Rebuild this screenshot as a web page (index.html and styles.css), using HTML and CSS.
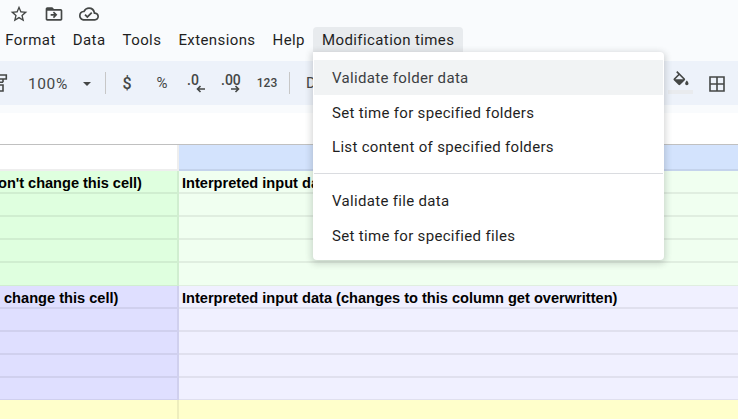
FILE: index.html
```html
<!DOCTYPE html>
<html lang="en">
<head>
<meta charset="utf-8">
<title>Spreadsheet</title>
<link rel="stylesheet" href="styles.css">
</head>
<body>
<header class="header">
  <div class="title-icons">
    <svg class="icon" viewBox="0 0 24 24"><path d="M22 9.24l-7.19-.62L12 2 9.19 8.63 2 9.24l5.46 4.73L5.82 21 12 17.27 18.18 21l-1.63-7.03L22 9.24zM12 15.4l-3.76 2.27 1-4.28-3.32-2.88 4.38-.38L12 6.1l1.71 4.04 4.38.38-3.32 2.88 1 4.28L12 15.4z"/></svg>
    <svg class="icon" viewBox="0 0 24 24"><path d="M20 6h-8l-2-2H4c-1.100 0-2 .9-2 2v12c0 1.100.9 2 2 2h16c1.100 0 2-.9 2-2V8c0-1.100-.9-2-2-2zm0 12H4V8h16v10zm-8-1 4-4-4-4-1.400 1.400 1.600 1.600H8v2h4.200l-1.600 1.600z"/></svg>
    <svg class="icon" viewBox="0 0 24 24"><path d="M19.350 10.040A7.490 7.490 0 0 0 12 4C9.110 4 6.600 5.640 5.350 8.040A5.994 5.994 0 0 0 0 14c0 3.310 2.690 6 6 6h13c2.760 0 5-2.240 5-5 0-2.640-2.050-4.780-4.650-4.960zM19 18H6c-2.210 0-4-1.790-4-4 0-2.050 1.530-3.760 3.560-3.970l1.070-.11.5-.95A5.469 5.469 0 0 1 12 6c2.620 0 4.880 1.860 5.390 4.430l.3 1.500 1.530.11A2.980 2.980 0 0 1 22 15c0 1.650-1.350 3-3 3zm-9-3.820-2.090-2.090L6.500 13.500 10 17l6.010-6.010-1.410-1.410z"/></svg>
  </div>
  <nav class="menubar">
    <span class="menu-name">Format</span>
    <span class="menu-name">Data</span>
    <span class="menu-name">Tools</span>
    <span class="menu-name">Extensions</span>
    <span class="menu-name">Help</span>
    <span class="menu-name open">Modification times</span>
  </nav>
  <div class="toolbar">
    <svg class="roller" viewBox="0 0 8 20"><path d="M0 2h6.300v4H0M0 9.200h3M3 6v3.200M0 12h3v6H0"/></svg>
    <span class="zoom">100%</span>
    <span class="caret"></span>
    <span class="separator"></span>
    <span class="tool currency">$</span>
    <span class="tool percent">%</span>
    <span class="tool decimal">.0<svg class="arrow" viewBox="0 0 10 8"><path d="M9 4H1.500M4.500 1l-3 3 3 3"/></svg></span>
    <span class="tool decimal more">.00<svg class="arrow" viewBox="0 0 10 8"><path d="M1 4h7.500M5.500 1l3 3-3 3"/></svg></span>
    <span class="tool formats">123</span>
    <span class="separator"></span>
    <span class="font-name">D</span>
    <span class="fill"><svg viewBox="0 0 24 24"><path d="M16.560 8.940 7.620 0 6.210 1.410l2.380 2.380-5.150 5.150c-.59.59-.59 1.540 0 2.120l5.500 5.500c.29.29.68.44 1.060.44s.77-.15 1.060-.44l5.500-5.500c.59-.58.59-1.530 0-2.120zM5.210 10 10 5.210 14.790 10zM19 11.500s-2 2.170-2 3.500c0 1.100.9 2 2 2s2-.9 2-2c0-1.330-2-3.500-2-3.500z"/></svg></span>
    <svg class="borders" viewBox="0 0 16 16"><path d="M1 1h14v14H1zM8 1v14M1 8h14"/></svg>
  </div>
</header>
<main class="sheet">
  <div class="row head"><div class="cell"></div><div class="cell"></div></div>
  <section class="green">
    <div class="row"><div class="cell clipped">on't change this cell)</div><div class="cell">Interpreted input data (changes to this column get overwritten)</div></div>
    <div class="row"><div class="cell"></div><div class="cell"></div></div>
    <div class="row"><div class="cell"></div><div class="cell"></div></div>
    <div class="row"><div class="cell"></div><div class="cell"></div></div>
    <div class="row"><div class="cell"></div><div class="cell"></div></div>
  </section>
  <section class="violet">
    <div class="row"><div class="cell inset">change this cell)</div><div class="cell">Interpreted input data (changes to this column get overwritten)</div></div>
    <div class="row"><div class="cell"></div><div class="cell"></div></div>
    <div class="row"><div class="cell"></div><div class="cell"></div></div>
    <div class="row"><div class="cell"></div><div class="cell"></div></div>
    <div class="row"><div class="cell"></div><div class="cell"></div></div>
  </section>
  <section class="yellow">
    <div class="row"><div class="cell"></div><div class="cell"></div></div>
  </section>
</main>
<div class="dropdown">
  <div class="item hover">Validate folder data</div>
  <div class="item">Set time for specified folders</div>
  <div class="item">List content of specified folders</div>
  <hr class="divider">
  <div class="item">Validate file data</div>
  <div class="item">Set time for specified files</div>
</div>
</body>
</html>
```
FILE: styles.css
```css
* { box-sizing: border-box; }
body {
  margin: 0;
  width: 738px;
  height: 419px;
  overflow: hidden;
  position: relative;
  background: #fff;
  font-family: Roboto, "Liberation Sans", sans-serif;
  color: #1f1f1f;
}
.header { height: 113px; background: #f9fbfd; }
.title-icons { display: flex; gap: 15px; height: 27px; padding: 4px 0 0 9px; }
.icon { width: 20px; height: 20px; fill: #444746; }
.menubar { display: flex; height: 34px; padding-left: 5.300px; gap: 17.100px; }
.menu-name { height: 26px; line-height: 26px; font-size: 15px; letter-spacing: 0.4px; white-space: nowrap; }
.open {
  width: 150px;
  padding-left: 9px;
  margin-left: -9px;
  background: #e8ebee;
  border-radius: 4px 4px 0 0;
}
.toolbar {
  display: flex;
  align-items: center;
  height: 44px;
  background: #edf2fa;
  color: #444746;
}
.toolbar > * { flex: none; }
.roller { width: 8px; height: 20px; fill: none; stroke: #444746; stroke-width: 1.600; }
.zoom { width: 75px; padding: 1px 0 0 20px; font-size: 15.500px; letter-spacing: 0.6px; }
.caret { border: 4px solid transparent; border-top-color: #444746; border-bottom: 0; width: 8px; margin-top: 2px; }
.separator { width: 1px; height: 22px; background: #c7c7c7; margin-left: 14px; }
.tool { font-weight: 500; text-align: center; }
.currency { width: 20px; margin-left: 11px; font-size: 16px; }
.percent { width: 24px; margin-left: 13px; font-size: 15px; font-weight: 400; }
.decimal { position: relative; width: 24px; margin-left: 13px; height: 24px; line-height: 18px; font-size: 14px; text-align: left; }
.more { margin-left: 10px; }
.arrow { position: absolute; left: 9px; bottom: 2px; width: 10px; height: 8px; fill: none; stroke: #444746; stroke-width: 1.600; }
.formats { width: 24px; margin-left: 10px; font-size: 12px; }
.formats + .separator { margin-left: 10px; }
.font-name { width: 60px; margin-left: 16px; font-size: 15px; }
.fill { width: 25px; margin-left: 302px; height: 22px; border-bottom: 4px solid #e9ebee; }
.fill svg { display: block; width: 20px; height: 20px; margin: -1px 0 0 3px; fill: #444746; }
.borders { width: 16px; height: 16px; fill: none; stroke: #444746; stroke-width: 1.600; margin: 2px 0 0 16px; }

.sheet { margin-top: 31px; border-top: 1px solid #c0c0c0; }
.row { display: grid; grid-template-columns: 179px 1fr; height: 23px; }
.cell {
  overflow: hidden;
  white-space: nowrap;
  padding-left: 3px;
  border-bottom: 2px solid rgba(0, 0, 0, 0.065);
  font: bold 14.600px/24px "Liberation Sans", sans-serif;
  color: #000;
}
.cell:first-child { padding-left: 0; border-right: 2px solid rgba(0, 0, 0, 0.065); }
.cell.inset { padding-left: 4px; }
.cell.clipped { text-indent: -2px; letter-spacing: -0.030px; }
.head { height: 26px; }
.head .cell:last-child { background: #d3e3fd; }
.green .cell:first-child { background: #dfffdf; }
.green .cell:last-child { background: #f0fff0; }
.violet .cell:first-child { background: #dfdfff; }
.violet .cell:last-child { background: #f0f0ff; }
.yellow .cell { background: #ffffcb; }
.green .row:last-child .cell, .violet .row:last-child .cell { border-bottom-width: 1px; }
.violet .row:last-child { height: 22px; }

.dropdown {
  position: absolute;
  left: 313px;
  top: 52px;
  width: 351px;
  height: 208px;
  padding: 8px 1px 0;
  background: #fff;
  border-radius: 0 4px 4px 4px;
  box-shadow: 0 2px 6px 2px rgba(60, 64, 67, 0.2);
}
.item { height: 34.500px; line-height: 35px; padding-left: 18px; font-size: 15px; letter-spacing: 0.32px; white-space: nowrap; }
.item.hover { line-height: 37px; }
.hover { background: #f1f3f4; height: 35px; color: #3c4043; }
.hover + .item { line-height: 36px; }
.divider { margin: 9px 0 10px; border: 0; height: 1px; background: #dadce0; }
```
